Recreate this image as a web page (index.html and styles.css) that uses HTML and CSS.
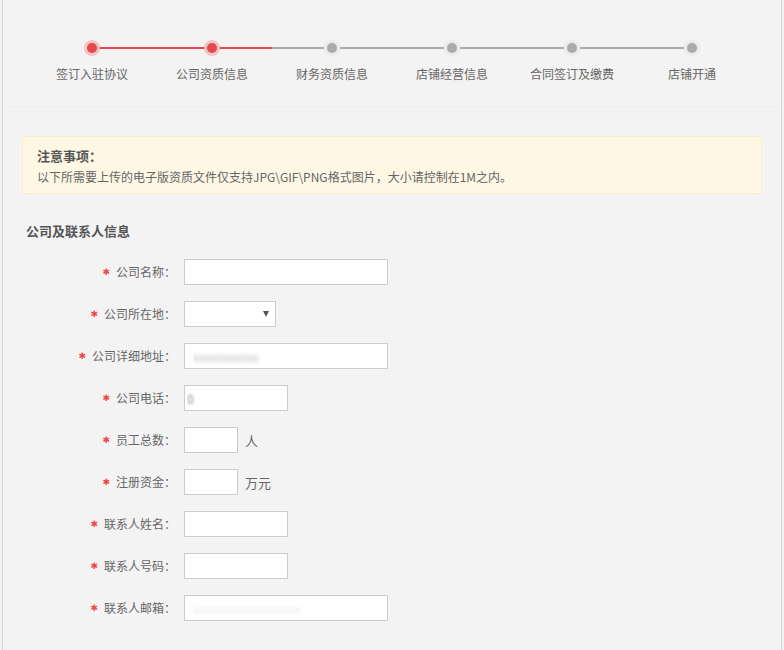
FILE: index.html
```html
<!DOCTYPE html>
<html lang="zh-CN">
<head>
<meta charset="utf-8">
<title>公司资质信息</title>
<link rel="stylesheet" href="styles.css">
</head>
<body>
<div class="page">
  <div class="steps-wrap">
    <div class="steps">
      <div class="step done"><span class="dot"></span><span class="step-label">签订入驻协议</span></div>
      <div class="step done"><span class="dot"></span><span class="step-label">公司资质信息</span></div>
      <div class="step"><span class="dot"></span><span class="step-label">财务资质信息</span></div>
      <div class="step"><span class="dot"></span><span class="step-label">店铺经营信息</span></div>
      <div class="step"><span class="dot"></span><span class="step-label">合同签订及缴费</span></div>
      <div class="step"><span class="dot"></span><span class="step-label">店铺开通</span></div>
    </div>
  </div>

  <div class="content">
    <div class="notice">
      <div class="notice-title">注意事项：</div>
      <div class="notice-text">以下所需要上传的电子版资质文件仅支持JPG\GIF\PNG格式图片，大小请控制在1M之内。</div>
    </div>

    <h3 class="section-title">公司及联系人信息</h3>

    <form class="form">
      <div class="row">
        <label class="label"><span class="req">✱</span>公司名称：</label>
        <input class="field w-lg" type="text">
      </div>
      <div class="row">
        <label class="label"><span class="req">✱</span>公司所在地：</label>
        <div class="select-wrap"><select class="field w-sel"><option></option></select></div>
      </div>
      <div class="row">
        <label class="label"><span class="req">✱</span>公司详细地址：</label>
        <input class="field w-lg blurred" type="text" value="xxxxxxxxxxx">
      </div>
      <div class="row">
        <label class="label"><span class="req">✱</span>公司电话：</label>
        <input class="field w-md blurred dark" type="text" value="0">
      </div>
      <div class="row">
        <label class="label"><span class="req">✱</span>员工总数：</label>
        <input class="field w-sm" type="text">
        <span class="unit">人</span>
      </div>
      <div class="row">
        <label class="label"><span class="req">✱</span>注册资金：</label>
        <input class="field w-sm" type="text">
        <span class="unit">万元</span>
      </div>
      <div class="row">
        <label class="label"><span class="req">✱</span>联系人姓名：</label>
        <input class="field w-md" type="text">
      </div>
      <div class="row">
        <label class="label"><span class="req">✱</span>联系人号码：</label>
        <input class="field w-md" type="text">
      </div>
      <div class="row">
        <label class="label"><span class="req">✱</span>联系人邮箱：</label>
        <input class="field w-lg blurred faint" type="text" value="xxxxxxxxxxxxxxxxxx">
      </div>
    </form>
  </div>
</div>
</body>
</html>
```

FILE: styles.css
```css
html, body {
  margin: 0;
  padding: 0;
  background: #f3f3f3;
}

body {
  font-family: "Noto Sans CJK SC", "Noto Sans", sans-serif;
  font-size: 12px;
  color: #666;
}

.page {
  margin: 0 2px;
  min-height: 650px;
  border-left: 1px solid #d4d4d4;
  border-right: 1px solid #d4d4d4;
  background: #f3f3f3;
}

/* steps */
.steps-wrap {
  padding: 40px 0 24px;
  border-bottom: 1px dotted #ebebeb;
}

.steps {
  display: grid;
  grid-template-columns: repeat(6, 120px);
  margin-left: 29px;
}

.step {
  position: relative;
  display: flex;
  flex-direction: column;
  align-items: center;
}

.step::before,
.step::after {
  content: "";
  position: absolute;
  top: 7px;
  width: 50%;
  height: 2px;
  background: #aaaaaa;
}

.step::before { left: 0; }
.step::after { left: 50%; }

.step:first-child::before,
.step:last-child::after {
  display: none;
}

.step.done::before,
.step.done::after {
  background: #e5484d;
}

.dot {
  position: relative;
  z-index: 1;
  width: 10px;
  height: 10px;
  margin: 3px;
  border-radius: 50%;
  background: #aaaaaa;
  box-shadow: 0 0 0 3px #ebebeb;
}

.step.done .dot {
  background: #e5484d;
  box-shadow: 0 0 0 3px #f7c4c5;
}

.step-label {
  margin-top: 10px;
  line-height: 16px;
  font-size: 12px;
  color: #666;
  white-space: nowrap;
}

/* content */
.content {
  padding: 29px 19px 0;
}

.notice {
  background: #fdf7e3;
  border: 1px solid #fbeccc;
  padding: 10px 14px 7px;
}

.notice-title {
  font-size: 13px;
  font-weight: bold;
  color: #555;
  line-height: 18px;
}

.notice-text {
  margin-top: 3px;
  font-size: 12px;
  line-height: 18px;
  color: #666;
}

.section-title {
  margin: 27px 0 18px 4px;
  font-size: 13px;
  font-weight: bold;
  line-height: 20px;
  color: #555;
}

/* form */
.form {
  margin: 0 0 0 -19px;
}

.row {
  display: flex;
  align-items: center;
  height: 26px;
  margin-bottom: 16px;
}

.label {
  display: flex;
  align-items: center;
  justify-content: flex-end;
  width: 173px;
  margin-right: 8px;
  font-size: 12px;
  line-height: 16px;
  color: #666;
  white-space: nowrap;
}

.req {
  font-family: "DejaVu Sans", sans-serif;
  color: #f0474b;
  margin-right: 6px;
  font-size: 9px;
  line-height: 16px;
}

.field {
  box-sizing: border-box;
  height: 26px;
  margin: 0;
  padding: 0 8px;
  border: 1px solid #cccccc;
  background: #fff;
  font-family: inherit;
  font-size: 12px;
  color: #333;
  outline: none;
}

.w-lg { width: 204px; }
.w-md { width: 104px; }
.w-sm { width: 54px; }
.w-sel { width: 92px; }

.select-wrap {
  position: relative;
}

.select-wrap select {
  -webkit-appearance: none;
  appearance: none;
  display: block;
}

.select-wrap::after {
  content: "";
  position: absolute;
  right: 7px;
  top: 10px;
  border-left: 3.5px solid transparent;
  border-right: 3.5px solid transparent;
  border-top: 6px solid #555;
}

.blurred {
  color: transparent;
  text-shadow: 0 0 4px #b8b8b8;
}

.blurred.dark {
  padding-left: 2px;
  text-shadow: 0 0 3px #888;
}

.blurred.faint {
  text-shadow: 0 0 4px #e6e6e6;
}

.unit {
  margin-left: 7px;
  font-size: 13px;
  color: #666;
}
```
